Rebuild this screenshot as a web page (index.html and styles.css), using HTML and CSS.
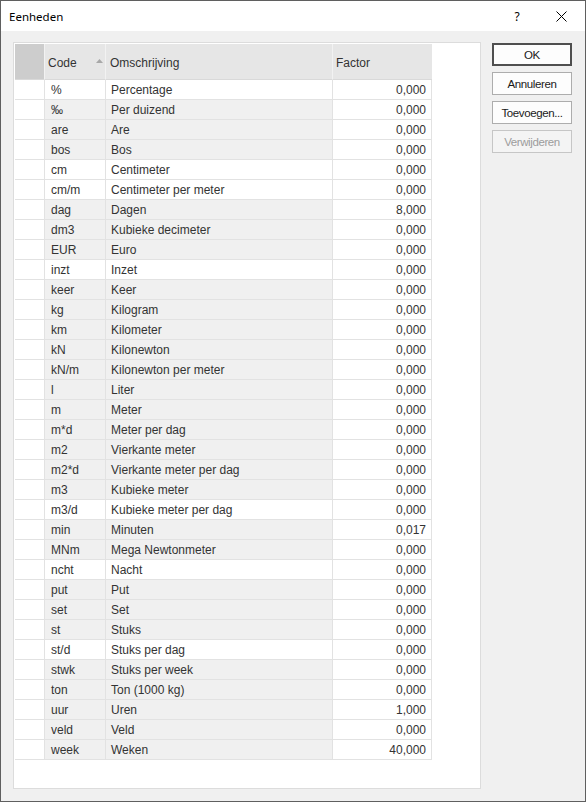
FILE: index.html
```html
<!DOCTYPE html>
<html lang="nl">
<head>
<meta charset="utf-8">
<title>Eenheden</title>
<link rel="stylesheet" href="styles.css">
</head>
<body>
<div class="window">
  <div class="titlebar">
    <span class="title">Eenheden</span>
    <div class="tb-buttons">
      <span class="help">?</span>
      <svg class="close" width="11" height="11" viewBox="0 0 11 11"><path d="M0.5 0.5 L10.5 10.5 M10.5 0.5 L0.5 10.5" stroke="#000" stroke-width="1" fill="none"/></svg>
    </div>
  </div>
  <div class="client">
    <div class="panel">
      <table class="grid">
        <thead>
          <tr>
            <th class="ind"></th>
            <th class="code"><div class="hcell"><span>Code</span><svg width="7" height="4" viewBox="0 0 7 4"><polygon points="3.5,0 7,4 0,4" fill="#a8a8a8"/></svg></div></th>
            <th class="oms">Omschrijving</th>
            <th class="fac">Factor</th>
          </tr>
        </thead>
        <tbody>
          <tr class="w"><td class="ind"></td><td class="code">%</td><td class="oms">Percentage</td><td class="fac">0,000</td></tr>
          <tr><td class="ind"></td><td class="code">‰</td><td class="oms">Per duizend</td><td class="fac">0,000</td></tr>
          <tr><td class="ind"></td><td class="code">are</td><td class="oms">Are</td><td class="fac">0,000</td></tr>
          <tr><td class="ind"></td><td class="code">bos</td><td class="oms">Bos</td><td class="fac">0,000</td></tr>
          <tr class="w"><td class="ind"></td><td class="code">cm</td><td class="oms">Centimeter</td><td class="fac">0,000</td></tr>
          <tr class="w"><td class="ind"></td><td class="code">cm/m</td><td class="oms">Centimeter per meter</td><td class="fac">0,000</td></tr>
          <tr><td class="ind"></td><td class="code">dag</td><td class="oms">Dagen</td><td class="fac">8,000</td></tr>
          <tr><td class="ind"></td><td class="code">dm3</td><td class="oms">Kubieke decimeter</td><td class="fac">0,000</td></tr>
          <tr><td class="ind"></td><td class="code">EUR</td><td class="oms">Euro</td><td class="fac">0,000</td></tr>
          <tr class="w"><td class="ind"></td><td class="code">inzt</td><td class="oms">Inzet</td><td class="fac">0,000</td></tr>
          <tr><td class="ind"></td><td class="code">keer</td><td class="oms">Keer</td><td class="fac">0,000</td></tr>
          <tr><td class="ind"></td><td class="code">kg</td><td class="oms">Kilogram</td><td class="fac">0,000</td></tr>
          <tr><td class="ind"></td><td class="code">km</td><td class="oms">Kilometer</td><td class="fac">0,000</td></tr>
          <tr><td class="ind"></td><td class="code">kN</td><td class="oms">Kilonewton</td><td class="fac">0,000</td></tr>
          <tr><td class="ind"></td><td class="code">kN/m</td><td class="oms">Kilonewton per meter</td><td class="fac">0,000</td></tr>
          <tr><td class="ind"></td><td class="code">l</td><td class="oms">Liter</td><td class="fac">0,000</td></tr>
          <tr><td class="ind"></td><td class="code">m</td><td class="oms">Meter</td><td class="fac">0,000</td></tr>
          <tr><td class="ind"></td><td class="code">m*d</td><td class="oms">Meter per dag</td><td class="fac">0,000</td></tr>
          <tr><td class="ind"></td><td class="code">m2</td><td class="oms">Vierkante meter</td><td class="fac">0,000</td></tr>
          <tr><td class="ind"></td><td class="code">m2*d</td><td class="oms">Vierkante meter per dag</td><td class="fac">0,000</td></tr>
          <tr><td class="ind"></td><td class="code">m3</td><td class="oms">Kubieke meter</td><td class="fac">0,000</td></tr>
          <tr class="w"><td class="ind"></td><td class="code">m3/d</td><td class="oms">Kubieke meter per dag</td><td class="fac">0,000</td></tr>
          <tr><td class="ind"></td><td class="code">min</td><td class="oms">Minuten</td><td class="fac">0,017</td></tr>
          <tr><td class="ind"></td><td class="code">MNm</td><td class="oms">Mega Newtonmeter</td><td class="fac">0,000</td></tr>
          <tr class="w"><td class="ind"></td><td class="code">ncht</td><td class="oms">Nacht</td><td class="fac">0,000</td></tr>
          <tr><td class="ind"></td><td class="code">put</td><td class="oms">Put</td><td class="fac">0,000</td></tr>
          <tr><td class="ind"></td><td class="code">set</td><td class="oms">Set</td><td class="fac">0,000</td></tr>
          <tr><td class="ind"></td><td class="code">st</td><td class="oms">Stuks</td><td class="fac">0,000</td></tr>
          <tr class="w"><td class="ind"></td><td class="code">st/d</td><td class="oms">Stuks per dag</td><td class="fac">0,000</td></tr>
          <tr><td class="ind"></td><td class="code">stwk</td><td class="oms">Stuks per week</td><td class="fac">0,000</td></tr>
          <tr><td class="ind"></td><td class="code">ton</td><td class="oms">Ton (1000 kg)</td><td class="fac">0,000</td></tr>
          <tr><td class="ind"></td><td class="code">uur</td><td class="oms">Uren</td><td class="fac">1,000</td></tr>
          <tr><td class="ind"></td><td class="code">veld</td><td class="oms">Veld</td><td class="fac">0,000</td></tr>
          <tr><td class="ind"></td><td class="code">week</td><td class="oms">Weken</td><td class="fac">40,000</td></tr>
        </tbody>
      </table>
    </div>
    <div class="buttons">
      <button class="btn default">OK</button>
      <button class="btn">Annuleren</button>
      <button class="btn">Toevoegen...</button>
      <button class="btn disabled">Verwijderen</button>
    </div>
  </div>
</div>
</body>
</html>
```

FILE: styles.css
```css
* { box-sizing: border-box; }
html, body { margin: 0; padding: 0; background: #f0f0f0; }
.window {
  width: 586px;
  height: 802px;
  border: 1px solid #5f5f5f;
  background: #f0f0f0;
  display: flex;
  flex-direction: column;
  overflow: hidden;
}
.titlebar {
  height: 30px;
  flex: none;
  background: #ffffff;
  display: flex;
  align-items: center;
  justify-content: space-between;
  padding-left: 8px;
}
.title {
  font-family: "Noto Sans", "Liberation Sans", sans-serif;
  font-size: 11.5px;
  color: #000;
  margin-top: 1px;
}
.tb-buttons {
  display: flex;
  align-items: center;
  height: 100%;
}
.help {
  font-family: "Noto Sans", "Liberation Sans", sans-serif;
  font-size: 12px;
  color: #000;
  width: 10px;
  text-align: center;
  margin-right: 34px;
}
.close {
  display: block;
  margin: 0 18px 0 0;
}
.client {
  flex: 1;
  display: flex;
  padding: 11px 12px 12px 12px;
  gap: 11px;
}
.panel {
  width: 468px;
  background: #ffffff;
  border: 1px solid #dcdcdc;
  padding: 1px;
}
.grid {
  border-collapse: separate;
  border-spacing: 0;
  table-layout: fixed;
  width: 417px;
  font-family: "Liberation Sans", Arial, sans-serif;
  font-size: 12px;
  color: #333;
}
.grid th, .grid td {
  padding: 0;
  overflow: hidden;
  white-space: nowrap;
}
.grid th {
  height: 36px;
  background: #e6e6e6;
  border-bottom: 1px solid #d9d9d9;
  border-right: 1px solid #f2f2f2;
  text-align: left;
  font-weight: normal;
  vertical-align: middle;
  padding-left: 4px;
  padding-top: 2px;
}
.grid th.ind { background: #cdcdcd; padding: 0; }
.grid th.code { padding-left: 3px; padding-right: 2px; }
.grid th.fac { padding-left: 3px; border-right: none; }
.hcell {
  display: flex;
  align-items: center;
  justify-content: space-between;
}
.hcell svg { margin-top: -3px; }
.grid td {
  height: 20px;
  line-height: 18px;
  padding-top: 1px;
  border-bottom: 1px solid #e2e2e2;
  border-right: 1px solid #e2e2e2;
  background: #f0f0f0;
  padding-left: 6px;
}
.grid td.ind { background: #ffffff; padding: 0; }
.grid td.oms { padding-left: 5px; }
.grid td.fac {
  background: #ffffff;
  text-align: right;
  padding-left: 0;
  padding-right: 5px;
}
.grid tr.w td { background: #ffffff; }
.grid .ind { width: 30px; }
.grid .code { width: 61px; }
.grid .oms { width: 227px; }
.grid .fac { width: 99px; }
.buttons {
  width: 80px;
  display: flex;
  flex-direction: column;
  gap: 6px;
  padding-top: 1px;
}
.btn {
  height: 23px;
  width: 80px;
  margin: 0;
  padding: 0;
  background: #fdfdfd;
  border: 1px solid #adadad;
  font-family: "Liberation Sans", Arial, sans-serif;
  font-size: 11.5px;
  letter-spacing: -0.4px;
  color: #1a1a1a;
  text-align: center;
}
.btn.default { border: 2px solid #4f4f4f; }
.btn.disabled {
  color: #9c9c9c;
  background: #f4f4f4;
  border-color: #c6c6c6;
}
```
